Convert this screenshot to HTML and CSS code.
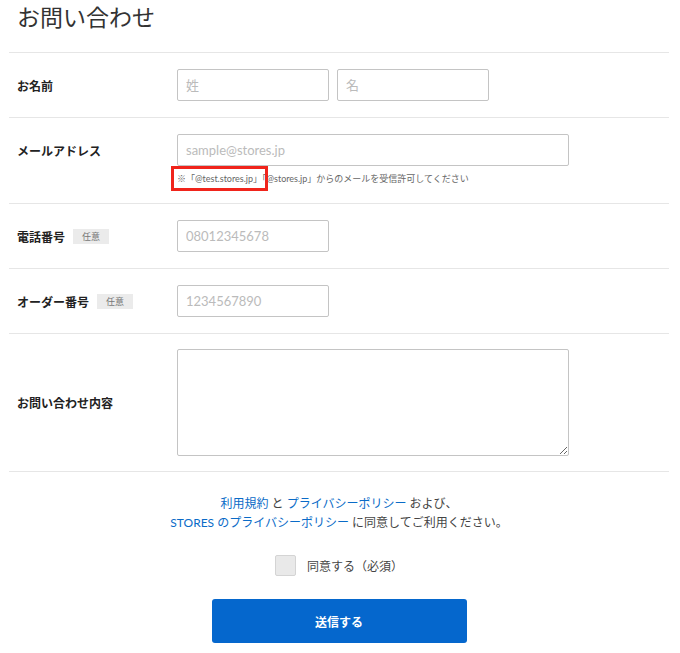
FILE: index.html
```html
<!DOCTYPE html>
<html lang="ja">
<head>
  <meta charset="UTF-8">
  <meta name="viewport" content="width=device-width, initial-scale=1.0">
  <title>お問い合わせ</title>
  <link rel="stylesheet" href="styles.css">
</head>
<body>
  <div class="page">
    <h1 class="title">お問い合わせ</h1>

    <form class="form">
      <div class="row">
        <div class="label">お名前</div>
        <div class="field name">
          <input class="input short" type="text" placeholder="姓">
          <input class="input short" type="text" placeholder="名">
        </div>
      </div>

      <div class="row">
        <div class="label">メールアドレス</div>
        <div class="field">
          <input class="input wide" type="email" placeholder="sample@stores.jp">
          <p class="note"><span class="mark">※「@test.stores.jp」</span>「@stores.jp」からのメールを受信許可してください</p>
        </div>
      </div>

      <div class="row">
        <div class="label">電話番号 <span class="badge">任意</span></div>
        <div class="field">
          <input class="input short" type="tel" placeholder="08012345678">
        </div>
      </div>

      <div class="row">
        <div class="label">オーダー番号 <span class="badge">任意</span></div>
        <div class="field">
          <input class="input short" type="text" placeholder="1234567890">
        </div>
      </div>

      <div class="row middle">
        <div class="label">お問い合わせ内容</div>
        <div class="field">
          <textarea class="input wide area"></textarea>
        </div>
      </div>

      <div class="terms">
        <p><a href="#">利用規約</a> と <a href="#">プライバシーポリシー</a> および、<br>
        <a href="#">STORES のプライバシーポリシー</a> に同意してご利用ください。</p>
        <label class="agree"><span class="check"></span>同意する（必須）</label>
        <button class="submit" type="button">送信する</button>
      </div>
    </form>
  </div>
</body>
</html>
```

FILE: styles.css
```css
body {
  margin: 0;
  background: #fff;
  color: #333;
  font-family: Lato, "Noto Sans CJK JP", sans-serif;
}
.page {
  width: 660px;
  margin-left: 9px;
}
.title {
  margin: 0;
  padding: 0 8px 17px;
  font-size: 23px;
  font-weight: 400;
  line-height: 35px;
  color: #333;
  border-bottom: 1px solid #e6e6e6;
}
.row {
  display: grid;
  grid-template-columns: 160px 1fr;
  align-items: start;
  padding: 16px 8px;
  border-bottom: 1px solid #e6e6e6;
}
.row.middle {
  align-items: center;
  padding: 15px 8px;
}
.label {
  display: flex;
  align-items: center;
  min-height: 32px;
  font-size: 12px;
  font-weight: 700;
  color: #222;
}
.badge {
  display: inline-block;
  margin-left: 8px;
  padding: 0 9px;
  height: 15px;
  line-height: 15px;
  background: #ebebeb;
  color: #777;
  font-size: 9px;
  font-weight: 400;
}
.field.name {
  display: flex;
  gap: 8px;
}
.input {
  box-sizing: border-box;
  height: 32px;
  padding: 0 8px;
  border: 1px solid #c4c4c4;
  border-radius: 2px;
  font-family: Lato, "Noto Sans CJK JP", sans-serif;
  font-size: 13px;
  color: #333;
  display: block;
}
.input::placeholder {
  color: #bbb;
}
.short {
  width: 152px;
}
.wide {
  width: 392px;
}
.area {
  height: 107px;
  padding: 8px;
  resize: vertical;
}
.note {
  margin: 5px 0 0;
  font-size: 9px;
  line-height: 16px;
  color: #666;
}
.mark {
  outline: 3px solid #f0241b;
  outline-offset: 3px;
  padding: 1px 0;
}
.terms {
  text-align: center;
  padding-top: 22px;
}
.terms p {
  margin: 0;
  font-size: 12px;
  line-height: 19px;
  color: #444;
}
.terms a {
  color: #0a6bc7;
  text-decoration: none;
}
.agree {
  display: flex;
  justify-content: center;
  align-items: center;
  gap: 11px;
  margin-top: 23px;
  font-size: 12px;
  color: #444;
}
.check {
  box-sizing: border-box;
  width: 21px;
  height: 21px;
  background: #e9e9e9;
  border: 1px solid #d4d4d4;
  border-radius: 2px;
}
.submit {
  display: block;
  width: 255px;
  height: 44px;
  margin: 23px auto 0;
  background: #0567cd;
  border: none;
  border-radius: 3px;
  color: #fff;
  font-family: Lato, "Noto Sans CJK JP", sans-serif;
  font-size: 12px;
  font-weight: 700;
}
```
